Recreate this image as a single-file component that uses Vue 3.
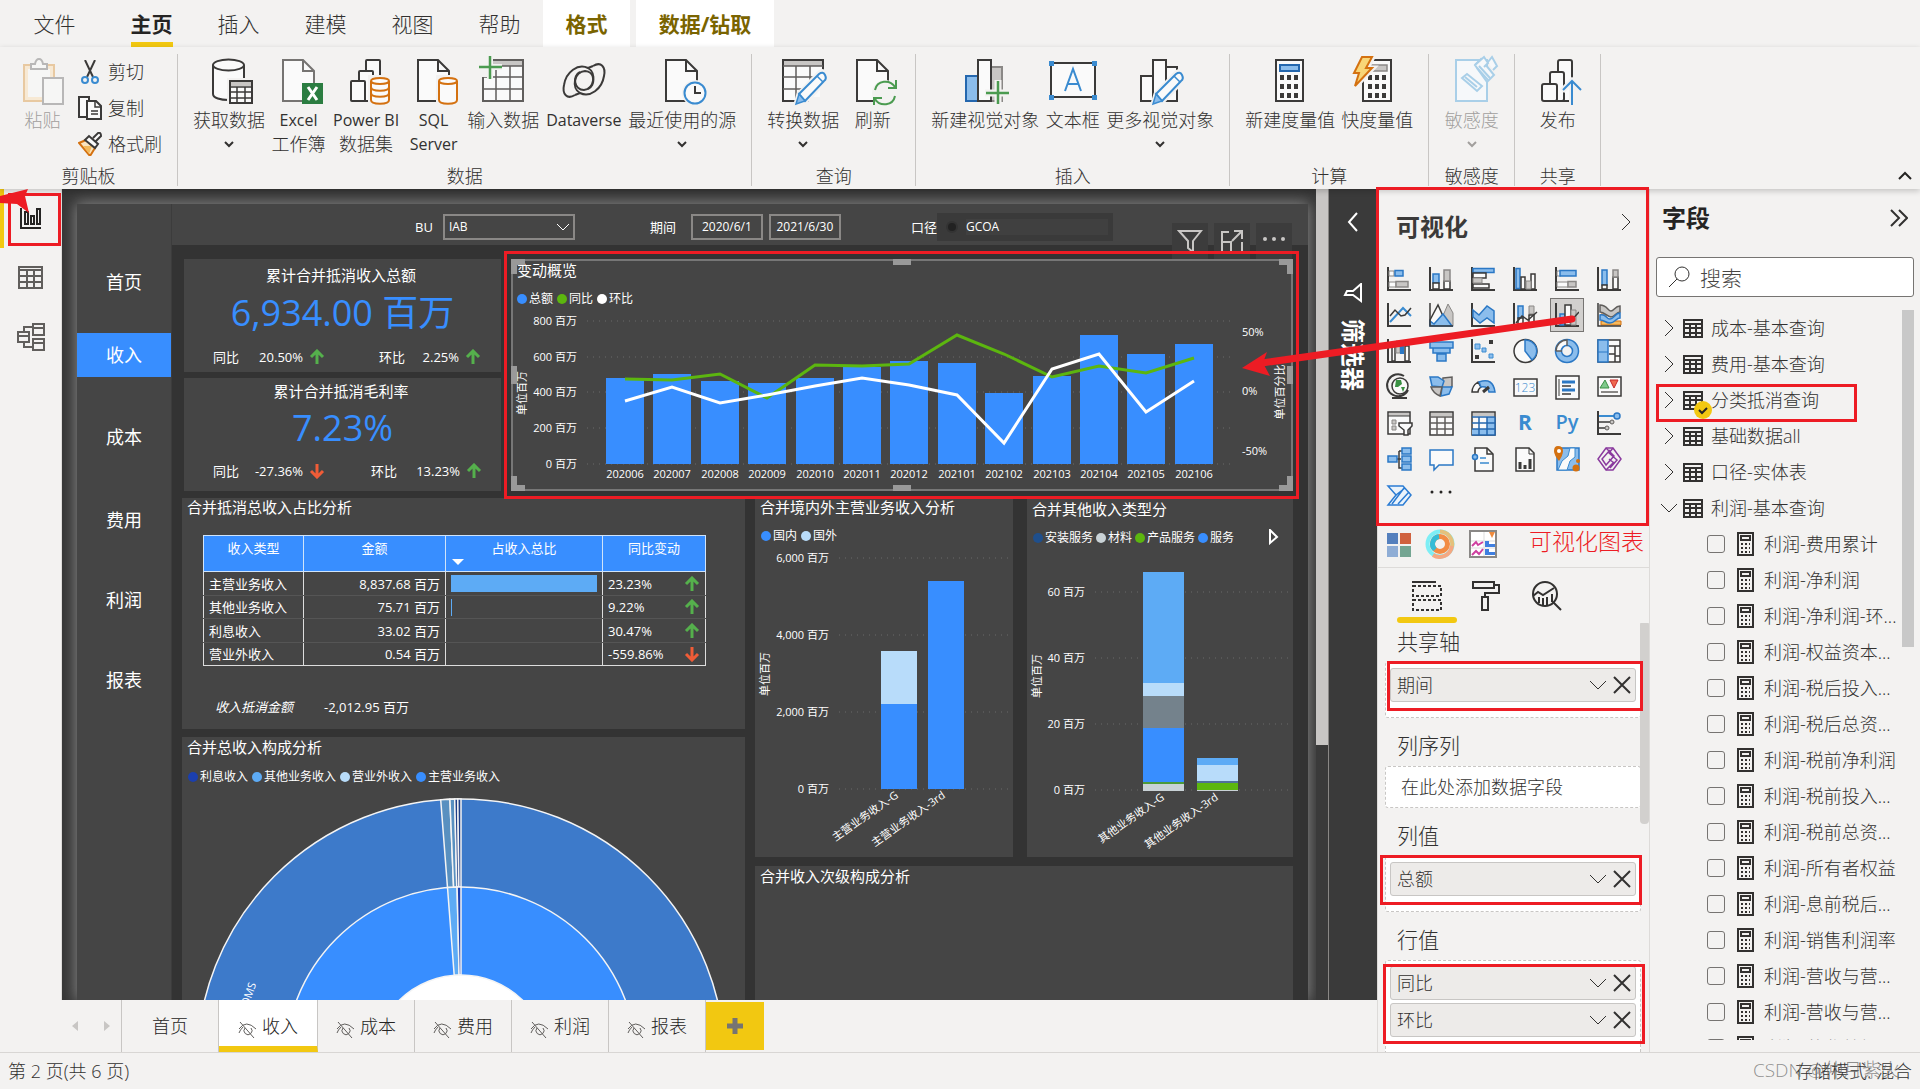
<script setup>
const K = '#3b3a39'
const B = '#2b78c5'
const L = '#8bbdec'
const G = '#c8c6c4'
const W = '#fafafa'

const page = (c = K) => `<path d="M8 3h20l11 11v30H8z" fill="${W}" stroke="${c}" stroke-width="2"/><path d="M28 3v11h11" fill="none" stroke="${c}" stroke-width="2"/>`
const orangeCyl = (rings) => `<path d="M26 18h22v30H26z" fill="#f3f2f1"/><path d="M29 24v19c0 5 18 5 18 0V24" fill="${W}" stroke="#d47110" stroke-width="2"/><ellipse cx="38" cy="24" rx="9" ry="3" fill="${W}" stroke="#d47110" stroke-width="2"/>` + (rings ? '<path d="M29 30c0 5 18 5 18 0M29 36c0 5 18 5 18 0" fill="none" stroke="#d47110" stroke-width="2"/>' : '')
const pencil = `<path d="M17 47l3-10 20-21q4-3 7 1t-1 7L26 45z" fill="${W}" stroke="#f3f2f1" stroke-width="5"/><path d="M20 37l20-20q4-3 6 1t-1 6L26 44z" fill="${W}" stroke="#3a8bd0" stroke-width="2"/><path d="M17 47l3-10 6 7z" fill="${L}" stroke="#3a8bd0" stroke-width="1.5"/><path d="M38 19l6 6" stroke="#3a8bd0" stroke-width="1.5"/>`
const keypad = (x, y) => [0, 1, 2].map(r => [0, 1, 2].map(c => `<rect x="${x + c * 7}" y="${y + r * 9}" width="4" height="5" fill="${K}"/>`).join('')).join('')

const big = {
  paste: `<g opacity=".55"><path d="M5 8h30v36H5z" fill="#fbe3bd" stroke="#e0a860" stroke-width="2"/><path d="M9 12h22v28H9z" fill="${W}"/><path d="M12 12V7h4q1-5 4-5t4 5h4v5z" fill="${W}" stroke="#888" stroke-width="2"/><path d="M24 21h20v26H24z" fill="${W}" stroke="#888" stroke-width="2"/></g>`,
  getdata: `<path d="M8 8v29c0 8 31 8 31 0V8" fill="${W}" stroke="${K}" stroke-width="2"/><ellipse cx="23.500" cy="8" rx="15.500" ry="5.500" fill="${W}" stroke="${K}" stroke-width="2"/><path d="M22 21h26v27H22z" fill="#f3f2f1"/><path d="M25 24h22v22H25z" fill="${W}" stroke="${K}" stroke-width="2"/><path d="M26 25h20v4H26z" fill="${G}"/><path d="M25 30h22M25 35h22M25 41h22M32 30v16M40 30v16" stroke="${K}" stroke-width="1.500"/>`,
  excel: page('#767472') + `<path d="M27 26h21v21H27z" fill="#2b7d41"/><path d="M33 30l9 13M42 30l-9 13" stroke="#fff" stroke-width="3"/>`,
  pbi: `<g fill="${W}" stroke="${K}" stroke-width="2"><rect x="24" y="3" width="14" height="40" rx="1"/><rect x="17" y="14" width="14" height="30" rx="1"/><rect x="9" y="24" width="14" height="20" rx="1"/></g>` + orangeCyl(true),
  sql: page() + orangeCyl(false),
  enter: `<path d="M4 3h40v41H4z" fill="${W}" stroke="#605e5c" stroke-width="2"/><path d="M5 4h38v5H5z" fill="${G}"/><path d="M4 9h40M4 20h40M4 32h40M17 9v35M31 9v35" stroke="#605e5c" stroke-width="1.500"/><path d="M0 0h14v20H0z" fill="#f3f2f1"/><path d="M0 10h23M11 -1v23" stroke="#f3f2f1" stroke-width="6"/><path d="M0 10h23M11 -1v23" stroke="#4b9b50" stroke-width="2.500"/>`,
  dataverse: `<g fill="none" stroke="${K}" stroke-width="2"><path d="M33 9c8-5 13 1 11 10C42 32 30 41 20 36c-9-5-6-21 5-22 10 0 11 15 3 18"/><path d="M15 38c-8 5-13-1-11-10C6 15 18 6 28 11c9 5 6 21-4 22-10 0-12-14-4-18"/><path d="M28 11l5-2M20 36l-5 2"/></g>`,
  recent: page() + `<circle cx="37" cy="36" r="13" fill="#f3f2f1"/><circle cx="37" cy="36" r="10.500" fill="${W}" stroke="#3a8bd0" stroke-width="2"/><path d="M37 29v7h6" fill="none" stroke="${K}" stroke-width="2"/>`,
  transform: `<path d="M4 3h40v41H4z" fill="${W}" stroke="${K}" stroke-width="2"/><path d="M5 4h38v5H5z" fill="${G}"/><path d="M4 9h40M4 20h40M4 32h40M17 9v35M31 9v35" stroke="#605e5c" stroke-width="1.500"/><path d="M30 40h17v7H30zM41 26h7v20h-7z" fill="#f3f2f1"/>` + pencil,
  refresh: page() + `<circle cx="36" cy="36" r="13" fill="#f3f2f1"/><g fill="none" stroke="#4b9b50" stroke-width="2"><path d="M26 33c2-10 15-11 20-3M46 39c-2 10-15 11-20 3"/><path d="M47 23v8h-8M25 48v-7h8"/></g>`,
  newvisual: `<path d="M30 10h11v34H30z" fill="${G}" stroke="#8a8886" stroke-width="2"/><path d="M5 19h12v25H5z" fill="${L}" stroke="#2467ae" stroke-width="2"/><path d="M17 3h13v41H17z" fill="${W}" stroke="${K}" stroke-width="2"/><path d="M24 36h24M37 23v25" stroke="#f3f2f1" stroke-width="7"/><path d="M25 36h23M37 24v23" stroke="#4b9b50" stroke-width="2.500"/>`,
  textbox: `<path d="M2 6h44v34H2z" fill="${W}" stroke="${K}" stroke-width="2"/><g fill="#3a8bd0"><path d="M0 4h5v5H0zM43 4h5v5h-5zM0 38h5v5H0zM43 38h5v5h-5z"/></g><path d="M16 34l8-22 8 22M19 27h10" fill="none" stroke="#3a8bd0" stroke-width="2"/>`,
  morevisual: `<g fill="${W}" stroke="${K}" stroke-width="2"><path d="M30 10h11v34H30zM5 19h12v25H5zM17 3h13v41H17z"/></g>` + pencil,
  measure: `<path d="M10 3h27v41H10z" fill="${W}" stroke="${K}" stroke-width="2"/><path d="M14 8h19v6H14z" fill="${L}" stroke="#2467ae" stroke-width="2"/>` + keypad(14, 18),
  quick: `<path d="M10 3h28v41H10z" fill="${W}" stroke="${K}" stroke-width="2"/><path d="M16 8h18v6H16z" fill="${G}" stroke="#8a8886" stroke-width="1.500"/>` + keypad(15, 18) + `<path d="M8 0h12l-6 11h6L2 30l4-13H1z" fill="#f3f2f1" stroke="#f3f2f1" stroke-width="5"/><path d="M9 0h10l-6 11h6L2 29l4-13H1z" fill="#f8d678" stroke="#d47110" stroke-width="2"/>`,
  sensitivity: `<g fill="#f6f8fa" stroke="#a9cfe8" stroke-width="2"><path d="M8 3h31v41H8z"/><path d="M14 21l5-4 15 12-5 5z"/><path d="M17 20l12 10" /><path d="M27 8l6-6 13 16-7 7z"/><path d="M27 8l9-8 4 6-4 4M40 5l4-5 5 9-4 4" /><path d="M29 11l11 12M31 9l11 12"/></g>`,
  publish: `<g fill="${W}" stroke="${K}" stroke-width="2"><rect x="24" y="3" width="14" height="41" rx="2"/><rect x="16" y="15" width="14" height="29" rx="2"/><rect x="8" y="27" width="15" height="17" rx="2"/></g><path d="M38 48V24M28 34l10-10 10 10" fill="none" stroke="#f3f2f1" stroke-width="6"/><path d="M38 48V25M29 33l9-9 9 9" fill="none" stroke="#3a8bd0" stroke-width="2"/>`
}

const small = {
  cut: `<path d="M7 0l8 17M17 0L9 17" stroke="${K}" stroke-width="2" fill="none"/><circle cx="7" cy="20" r="3" fill="none" stroke="#3a8bd0" stroke-width="2"/><circle cx="17" cy="20" r="3" fill="none" stroke="#3a8bd0" stroke-width="2"/>`,
  copy: `<path d="M1 1h10v20H1z" fill="${W}" stroke="${K}" stroke-width="2"/><path d="M9 5h9l5 5v13H9z" fill="${W}" stroke="${K}" stroke-width="2"/><path d="M17 5v6h6M13 15h7M13 18h7" fill="none" stroke="${K}" stroke-width="1.500"/>`,
  brush: `<path d="M1 11l7-3 9 8-5 8z" fill="#fbe3bd" stroke="#d47110" stroke-width="2"/><path d="M5 14l9 0-3 8z" fill="#f3b95b"/><path d="M7 8l4-4 9 8-3 4zM15 6l5-5q3-1 3 3l-5 5" fill="${W}" stroke="${K}" stroke-width="2"/>`
}

const menu = ['文件', '主页', '插入', '建模', '视图', '帮助']
const clip = [['cut', '剪切'], ['copy', '复制'], ['brush', '格式刷']]
const groups = [
  { name: '数据', items: [
    { i: 'getdata', t: ['获取数据'], d: 1 }, { i: 'excel', t: ['Excel', '工作簿'] }, { i: 'pbi', t: ['Power BI', '数据集'] },
    { i: 'sql', t: ['SQL', 'Server'] }, { i: 'enter', t: ['输入数据'] }, { i: 'dataverse', t: ['Dataverse'] }, { i: 'recent', t: ['最近使用的源'], d: 1 }] },
  { name: '查询', items: [{ i: 'transform', t: ['转换数据'], d: 1 }, { i: 'refresh', t: ['刷新'] }] },
  { name: '插入', items: [{ i: 'newvisual', t: ['新建视觉对象'] }, { i: 'textbox', t: ['文本框'] }, { i: 'morevisual', t: ['更多视觉对象'], d: 1 }] },
  { name: '计算', items: [{ i: 'measure', t: ['新建度量值'] }, { i: 'quick', t: ['快度量值'] }] },
  { name: '敏感度', items: [{ i: 'sensitivity', t: ['敏感度'], d: 1, off: 1 }] },
  { name: '共享', items: [{ i: 'publish', t: ['发布'] }] }
]
const latin = s => /^[A-Za-z ]+$/.test(s)

const nav = ['首页', '收入', '成本', '费用', '利润', '报表']
const kpis = [
  { title: '累计合并抵消收入总额', value: '6,934.00 百万', a: '20.50%', aUp: true, b: '2.25%' },
  { title: '累计合并抵消毛利率', value: '7.23%', a: '-27.36%', aUp: false, b: '13.23%' }
]

const months = ['202006', '202007', '202008', '202009', '202010', '202011', '202012', '202101', '202102', '202103', '202104', '202105', '202106']
const totals = [86, 90, 83, 81, 86, 97, 103, 101, 71, 88, 129, 110, 120]
const yoy = [72, 73, 67, 91, 58, 59, 57, 28, 47, 70, 59, 66, 51]
const mom = [94, 80, 96, 88, 79, 71, 78, 88, 136, 62, 47, 105, 74]
const cx = i => 114 + Math.round(i * 47.4)
const line = ys => ys.map((y, i) => `${cx(i)},${y}`).join(' ')
const axis1 = [['800 百万', 14], ['600 百万', 50], ['400 百万', 85], ['200 百万', 121], ['0 百万', 157]]

const rows = [
  ['主营业务收入', '8,837.68 百万', '23.23%', true, 100],
  ['其他业务收入', '75.71 百万', '9.22%', true, 1],
  ['利息收入', '33.02 百万', '30.47%', true, 0],
  ['营业外收入', '0.54 百万', '-559.86%', false, 0]
]

const axis2 = [['6,000 百万', 14], ['4,000 百万', 91], ['2,000 百万', 168], ['0 百万', 245]]
const axis3 = [['60 百万', 46], ['40 百万', 112], ['20 百万', 178], ['0 百万', 244]]
const stack3 = [
  [116, 26, 111, '#5dabf5'], [116, 137, 13, '#b8dcfa'], [116, 150, 32, '#74828c'], [116, 182, 54, '#388eff'], [116, 236, 2, '#4c9a3a'], [116, 238, 7, '#c9d2d6'],
  [170, 212, 7, '#5dabf5'], [170, 219, 16, '#b8dcfa'], [170, 235, 2, '#50709a'], [170, 237, 7, '#5cb60f'], [170, 244, 1, '#c9d2d6']
]

const pt = (r, a) => `${(279 - r * Math.sin(a)).toFixed(1)} ${(278 - r * Math.cos(a)).toFixed(1)}`
const slice = (r0, r1, a0, a1) => `M${pt(r0, a0)}L${pt(r1, a0)}A${r1} ${r1} 0 0 1 ${pt(r1, a1)}L${pt(r0, a1)}z`
const slices = [
  [176, 264, 0.077, 0.042, '#5990c0'], [176, 264, 0.042, 0.024, '#5990c0'], [176, 264, 0.024, 0.012, '#1f3f86'], [176, 264, 0.012, 0, '#1f3f86'],
  [88, 176, 0.077, 0.022, '#5dabf5'], [88, 176, 0.022, 0, '#1b3fae']
]

const sheets = ['收入', '成本', '费用', '利润', '报表']

const ax = `<path d="M1 0v23h23" fill="none" stroke="${K}" stroke-width="2"/>`
const frame = `fill="${W}" stroke="${K}" stroke-width="1.500"`
const viz = [
  ax + `<path d="M2 4h5v5H2zM2 15h7v5H2z" fill="${W}" stroke="#8a8886"/><path d="M8 3.500h8v5.500H8z" fill="${L}" stroke="${B}" stroke-width="1.500"/><path d="M9 14.500h12v5.500H9z" fill="${G}" stroke="#8a8886" stroke-width="1.500"/>`,
  ax + `<path d="M4 7h6v9H4z" fill="${L}" stroke="${B}" stroke-width="1.500"/><path d="M4 16h6v6H4zM15 14h6v8h-6z" ${frame}/><path d="M15 3h6v11h-6z" fill="${G}" stroke="#8a8886" stroke-width="1.500"/>`,
  ax + `<path d="M2 1.500h21v4H2z" fill="${L}" stroke="${B}" stroke-width="1.500"/><path d="M2 6h13v5H2zM2 17h16v4H2z" ${frame}/><path d="M2 11h9v5H2z" fill="${G}" stroke="#8a8886"/>`,
  ax + `<path d="M3 1.500h4v20H3z" fill="${L}" stroke="${B}" stroke-width="1.500"/><path d="M8 10h4v12H8zM18 7h4v15h-4z" ${frame}/><path d="M13 14h5v8h-5z" fill="${G}" stroke="#8a8886"/>`,
  ax + `<path d="M2 4h4v5H2zM2 15h11v5H2z" fill="${W}" stroke="#8a8886"/><path d="M5 3.500h16v5.500H5z" fill="${L}" stroke="${B}" stroke-width="1.500"/><path d="M13 14.500h8v5.500h-8z" fill="${G}" stroke="#8a8886" stroke-width="1.500"/>`,
  ax + `<path d="M5 3h5v15H5z" fill="${L}" stroke="${B}" stroke-width="1.500"/><path d="M5 18h5v4H5zM16 10h5v12h-5z" ${frame}/><path d="M16 3h5v7h-5z" fill="${G}" stroke="#8a8886" stroke-width="1.500"/>`,
  ax + `<path d="M3 19L16 5l8 8" fill="none" stroke="#3a8bd0" stroke-width="2"/><path d="M3 13l5-6 6 6 4-1 6-7" fill="none" stroke="${K}" stroke-width="1.500"/>`,
  `<path d="M10 22L19 1l5 9v13z" fill="${G}" stroke="#8a8886"/><path d="M1 17L9 2l9 20H1z" fill="${W}" stroke="${K}" stroke-width="1.500"/><path d="M1 23v-5l4 3 9-10 9 12z" fill="${L}" stroke="${B}" stroke-width="1.500"/><path d="M1 0v23h23" fill="none" stroke="${K}" stroke-width="1.500"/>`,
  ax + `<path d="M2 7l6 5 8-9 7 5v12l-7-5-7 5-7-6z" fill="${L}" stroke="${B}" stroke-width="1.500"/>`,
  ax + `<path d="M5 3h5v12H5z" fill="${L}" stroke="${B}" stroke-width="1.500"/><path d="M16 3h5v8h-5z" fill="${G}" stroke="#8a8886"/><path d="M5 15h5v7H5zM16 12h5v10h-5z" ${frame}/><path d="M3 20l6-7 6 4 9-8" fill="none" stroke="${K}" stroke-width="1.500"/>`,
  ax + `<path d="M5 11h5v11H5z" fill="${L}" stroke="${B}" stroke-width="1.500"/><path d="M10 2h6v20h-6z" ${frame}/><path d="M16 7h5v15h-5z" fill="${G}" stroke="#8a8886"/><path d="M14 20l10-11" stroke="${K}" stroke-width="1.500"/>`,
  `<path d="M4 18h20v4H4zM4 11h5v5H4z" fill="#f5b95d" stroke="#d47110"/><path d="M3 2c7 0 8 6 11 6s4-5 9-5v6c-4 0-5 5-9 5S8 9 3 9z" fill="${G}" stroke="#605e5c" stroke-width="1.500"/><path d="M3 12c6-2 6 4 10 4s5-6 10-6v5c-4 0-5 5-10 5S8 17 3 17z" fill="${L}" stroke="${B}" stroke-width="1.500"/><path d="M1 0v23h23" fill="none" stroke="${K}" stroke-width="1.500"/>`,
  ax + `<path d="M5 4h3v18H5zM18 7h4v15h-4z" ${frame}/><path d="M9 2h4v12H9z" fill="${G}" stroke="#8a8886"/><path d="M13 3h4v12h-4z" fill="${B}"/>`,
  `<path d="M1 3h23v6H1zM4 9h17v5H4zM8 15h9v7H8z" fill="${L}" stroke="${B}" stroke-width="1.500"/>`,
  ax + `<path d="M4 5h5v5H4zM11 9h4v4h-4zM18 15h4v4h-4z" fill="${L}" stroke="#3a8bd0"/><path d="M18 1h4v4h-4zM4 16h4v4H4z" fill="${K}"/>`,
  `<circle cx="12.500" cy="12" r="11.500" fill="${W}" stroke="${K}" stroke-width="1.500"/><path d="M12 1a11 11 0 0 1 7 20l-7-9z" fill="${L}" stroke="${B}" stroke-width="1.500"/>`,
  `<circle cx="12" cy="12" r="8.500" fill="none" stroke="${L}" stroke-width="6"/><path d="M3 12a9 9 0 0 1 9-9" fill="none" stroke="${W}" stroke-width="5"/><circle cx="12" cy="12" r="11.500" fill="none" stroke="${B}" stroke-width="1.500"/><circle cx="12" cy="12" r="5.500" fill="none" stroke="${B}" stroke-width="1.500"/><path d="M1 12A11 11 0 0 1 12 1v6M1 12h6" fill="none" stroke="#605e5c" stroke-width="1.500"/>`,
  `<path d="M1 1h22v22H1z" ${frame}/><path d="M1 1h10v22H1z" fill="${L}" stroke="${B}" stroke-width="1.500"/><path d="M1 13h10" stroke="${B}"/><path d="M12 7h11M18 7v16M12 15h6M18 17h5" stroke="${K}" stroke-width="1.500"/>`,
  `<path d="M17 1a11 11 0 1 0 4 14M5 23h15M13 20v3" fill="none" stroke="${K}" stroke-width="2"/><circle cx="13" cy="11" r="8" ${frame}/><path d="M9 5l5 0 1 4-4 3-3 0zM14 12l4 0-2 5z" fill="#3a9143"/>`,
  `<path d="M14 3l9-1v9l-3 4-7-3z" fill="${G}" stroke="#605e5c" stroke-width="1.500"/><path d="M1 2h8l6 4-2 6-10-1zM13 12h10l-3 7-8 2z" fill="${L}" stroke="${B}" stroke-width="1.500"/><path d="M2 12l11 0-2 9q-7-3-9-9z" fill="${G}" stroke="#605e5c" stroke-width="1.500"/>`,
  `<path d="M1 17h6q0-3 3-5L7 7Q1 11 1 17z" ${frame}/><path d="M8 7q14-5 16 10h-6q-1-6-8-5z" fill="${L}" stroke="${B}" stroke-width="1.500"/><path d="M12 17l6-5" stroke="${K}" stroke-width="3"/>`,
  `<path d="M1 4h23v17H1z" ${frame}/><text x="12" y="17" text-anchor="middle" font-size="12" font-family="Open Sans" fill="#3a8bd0">123</text>`,
  `<path d="M1 1h23v23H1z" ${frame}/><path d="M4 4v17" stroke="${K}"/><path d="M7 7h13M7 15h13" stroke="${B}" stroke-width="3"/><path d="M7 11h9M7 19h9" stroke="${K}" stroke-width="1.500"/>`,
  `<path d="M1 2h23v19H1z" ${frame}/><path d="M3 13l5-8 4 8z" fill="#7fc98b" stroke="#3a9143"/><path d="M13 5h8l-4 8z" fill="#ef6950" stroke="#c62828"/><path d="M4 17h17" stroke="#8a8886" stroke-width="2"/>`,
  `<path d="M1 1h22v22H1z" ${frame}/><path d="M2 2h20v3H2z" fill="${G}"/><path d="M1 5h22" stroke="${K}"/><path d="M5 9h4v4H5zM5 15h4v4H5z" fill="${G}" stroke="#8a8886"/><path d="M12 12h13v3l-4 4v5h-4v-5l-5-4z" ${frame}/>`,
  `<path d="M1 1h23v23H1z" ${frame}/><path d="M2 2h21v3H2z" fill="${G}"/><path d="M1 6h23M1 12h23M1 18h23M8 6v18M16 6v18" stroke="#605e5c" stroke-width="1.500"/>`,
  `<path d="M1 1h23v23H1z" ${frame}/><path d="M2 2h21v3H2z" fill="${G}"/><path d="M16 6h8v18H1v-6h15z" fill="${L}"/><path d="M1 6h23M1 12h23M1 18h23M8 6v18M16 6v18M24 6v18H1" fill="none" stroke="#2467ae" stroke-width="1.500"/>`,
  `<text x="12" y="19" text-anchor="middle" font-size="21" font-weight="700" font-family="Open Sans" fill="#3a8bd0">R</text>`,
  `<text x="12" y="18" text-anchor="middle" font-size="20" font-weight="600" font-family="Open Sans" fill="#3a8bd0">Py</text>`,
  ax + `<path d="M2 5h16" stroke="#3a8bd0" stroke-width="2"/><circle cx="20" cy="5" r="3" fill="${L}" stroke="${B}" stroke-width="1.500"/><path d="M2 11h11M2 17h6" stroke="${K}" stroke-width="1.500"/><circle cx="15" cy="11" r="2" fill="${G}" stroke="#605e5c"/><circle cx="10" cy="17" r="2" fill="${G}" stroke="#605e5c"/>`,
  `<path d="M9 12h5M12 4v17h4M12 4h4" fill="none" stroke="${K}" stroke-width="1.500"/><path d="M1 9h9v6H1zM15 1h9v6h-9zM15 9h9v6h-9zM15 17h9v6h-9z" fill="${L}" stroke="${B}" stroke-width="1.500"/>`,
  `<path d="M1 3h23v15H10l-5 5v-5H1z" fill="${W}" stroke="${B}" stroke-width="1.500"/>`,
  `<path d="M4 1h12l6 6v17H4z" ${frame}/><path d="M16 1v6h6" fill="none" stroke="${K}" stroke-width="1.500"/><circle cx="4" cy="10" r="2.500" fill="${L}" stroke="${B}" stroke-width="1.500"/><path d="M9 11h6M9 16h9" stroke="#3a8bd0" stroke-width="1.500"/>`,
  `<path d="M3 1h13l5 5v18H3z" ${frame}/><path d="M16 1v6h5" fill="none" stroke="${K}"/><path d="M7 15v7M12 18v4M17 12v10" stroke="${K}" stroke-width="3"/>`,
  `<path d="M2 1h22v22H2z" fill="${L}" stroke="${B}" stroke-width="1.500"/><path d="M12 23l3-9 5-4 0-9h-5l-2 8-6 5-4 9z" fill="${W}" stroke="#3a8bd0"/><path d="M3-1q5 0 5 5 0 4-4 10-5-6-5-10 0-5 4-5z" fill="#d47110"/><circle cx="4" cy="4" r="2" fill="#fff"/><circle cx="21" cy="21" r="3.500" fill="#d47110"/><circle cx="23" cy="14" r="2" fill="#d47110"/>`,
  `<g fill="none" stroke="#8a3a9e" stroke-width="1.500"><path d="M9 1h7l8 11-8 11H9L1 12z"/><path d="M9 1l8 8-8 9-4-6 8-9M9 23l8-8M16 1l-4 5 8 7-7 8M12 12l5 4"/></g>`,
  `<g fill="#eaf3fb" stroke="#2b7cd3" stroke-width="1.500"><path d="M1 3h15l8 9-8 10H1l8-10z"/><path d="M9 12l9-7M5 21L17 5M11 21l11-12" fill="none"/></g>`,
  `<g fill="#252423"><circle cx="3" cy="9" r="1.500"/><circle cx="12" cy="9" r="1.500"/><circle cx="21" cy="9" r="1.500"/></g>`
]

const wells = [
  { t: '共享轴', chips: ['期间'] },
  { t: '列序列', chips: [] },
  { t: '列值', chips: ['总额'] },
  { t: '行值', chips: ['同比', '环比'] }
]
const tables = ['成本-基本查询', '费用-基本查询', '分类抵消查询', '基础数据all', '口径-实体表', '利润-基本查询']
const fields = ['利润-费用累计', '利润-净利润', '利润-净利润-环...', '利润-权益资本...', '利润-税后投入...', '利润-税后总资...', '利润-税前净利润', '利润-税前投入...', '利润-税前总资...', '利润-所有者权益', '利润-息前税后...', '利润-销售利润率', '利润-营收与营...', '利润-营收与营...', '利润-营业总额']
</script>

<template>
  <div class="app">
    <nav class="menu">
      <button v-for="m in menu" :key="m" :class="{ on: m === '主页' }"><span>{{ m }}</span></button>
      <button class="ctx">格式</button>
      <button class="ctx wide">数据/钻取</button>
    </nav>

    <header class="ribbon">
      <section class="group">
        <div class="tools">
          <button class="tool off"><svg width="48" height="48" v-html="big.paste"></svg><span>粘贴</span></button>
          <div class="minis">
            <button v-for="c in clip" :key="c[0]" class="mini"><svg width="24" height="24" v-html="small[c[0]]"></svg>{{ c[1] }}</button>
          </div>
        </div>
        <h2>剪贴板</h2>
      </section>
      <section v-for="g in groups" :key="g.name" class="group">
        <div class="tools">
          <button v-for="b in g.items" :key="b.i" class="tool" :class="{ off: b.off }">
            <svg width="48" height="48" v-html="big[b.i]"></svg>
            <span v-for="s in b.t" :key="s" :class="{ latin: latin(s) }">{{ s }}</span>
            <svg v-if="b.d" class="caret" width="10" height="24"><path d="M1 10l4 4 4-4" /></svg>
          </button>
        </div>
        <h2>{{ g.name }}</h2>
      </section>
      <button class="collapse" aria-label="折叠功能区"><svg width="14" height="10"><path d="M1 8l6-6 6 6" /></svg></button>
    </header>

    <main class="work">
      <div class="left">
        <div class="stage">
          <aside class="rail">
            <button class="active" aria-label="报表"><svg width="22" height="22"><path d="M1 0v20h20" /><path d="M5 4h3v12H5zM11 8h3v8h-3zM17 1h3v15h-3z" /></svg></button>
            <button aria-label="数据"><svg width="26" height="24"><path d="M1 1h23v21H1zM1 4h23M1 10h23M1 16h23M9 4v18M16 4v18" /></svg></button>
            <button aria-label="模型"><svg width="28" height="28"><path d="M1 9h11v10H1zM16 1h11v11H16zM16 16h11v11H16zM1 13h11M16 5h11M16 20h11M7 9V4h9M7 19v5h9" /></svg></button>
            <i class="mark"></i>
          </aside>

          <div class="canvas">
            <div class="page">
              <nav class="side">
                <a v-for="n in nav" :key="n" href="#" :class="{ on: n === '收入' }">{{ n }}</a>
              </nav>
              <div class="sheet">
                <div class="filters">
                  <label for="bu">BU</label>
                  <div class="dropdown"><select id="bu"><option>IAB</option></select><svg width="14" height="10"><path d="M1 2l6 6 6-6" /></svg></div>
                  <label for="d1" class="period">期间</label>
                  <input id="d1" class="date" value="2020/6/1">
                  <input class="date" value="2021/6/30" aria-label="结束日期">
                  <span class="scope">口径</span>
                  <label class="radio"><input type="radio" name="scope"><span>GCOA</span></label>
                </div>

                <div class="body">
                  <div class="row top">
                    <div class="kpis">
                      <section v-for="k in kpis" :key="k.title" class="card kpi">
                        <h3>{{ k.title }}</h3>
                        <strong>{{ k.value }}</strong>
                        <p>
                          <span>同比</span><b>{{ k.a }}</b>
                          <svg width="16" height="16"><path :d="k.aUp ? 'M8 15V2M2 8l6-6 6 6' : 'M8 1v13M2 8l6 6 6-6'" :class="k.aUp ? 'up' : 'down'" /></svg>
                          <span class="second">环比</span><b>{{ k.b }}</b>
                          <svg width="16" height="16"><path d="M8 15V2M2 8l6-6 6 6" class="up" /></svg>
                        </p>
                      </section>
                    </div>

                    <section class="card combo">
                      <div class="actions">
                        <button aria-label="筛选"><svg width="26" height="26"><path d="M2 3h22l-8 10v11l-5-4v-7z" /></svg></button>
                        <button aria-label="焦点模式"><svg width="26" height="26"><path d="M10 4H3v20h20V14M3 14h9v10M13 13L23 3M15 3h8v8" /></svg></button>
                        <button aria-label="更多"><svg width="26" height="26"><g><circle cx="4" cy="11" r="2" /><circle cx="13" cy="11" r="2" /><circle cx="22" cy="11" r="2" /></g></svg></button>
                      </div>
                      <h3>变动概览</h3>
                      <ul class="legend"><li><i class="c1"></i>总额</li><li><i class="c2"></i>同比</li><li><i class="c3"></i>环比</li></ul>
                      <svg class="chart" viewBox="0 0 782 184">
                        <g v-for="a in axis1" :key="a[0]"><text x="66" :y="a[1] + 4" text-anchor="end">{{ a[0] }}</text><line x1="76" x2="720" :y1="a[1]" :y2="a[1]" /></g>
                        <rect v-for="(t, i) in totals" :key="'b' + i" :x="cx(i) - 19" :y="157 - t" width="38" :height="t" fill="#388eff" />
                        <polyline :points="line(yoy)" stroke="#5cb60f" />
                        <polyline :points="line(mom)" stroke="#fff" />
                        <text v-for="(m, i) in months" :key="m" :x="cx(i)" y="171" text-anchor="middle">{{ m }}</text>
                        <text x="731" y="29">50%</text><text x="731" y="88">0%</text><text x="731" y="148">-50%</text>
                        <text transform="translate(15 86) rotate(-90)" text-anchor="middle">单位百万</text>
                        <text transform="translate(773 85) rotate(-90)" text-anchor="middle">单位百分比</text>
                      </svg>
                      <svg class="handles" viewBox="0 0 782 232">
                        <path d="M1 1h780v230H1z" fill="none" stroke="#777" stroke-width="2" />
                        <path d="M0 0h14v6H6v9H0zM782 0h-14v6h8v9h6zM0 232h14v-6H6v-9H0zM782 232h-14v-6h8v-9h6zM382 0h18v6h-18zM382 226h18v6h-18zM0 107h6v18H0zM776 107h6v18h-6z" fill="#999" />
                      </svg>
                      <i class="mark"></i>
                    </section>
                  </div>

                  <div class="row">
                    <div class="colA">
                      <section class="card share">
                        <h3>合并抵消总收入占比分析</h3>
                        <table>
                          <thead><tr><th class="w1">收入类型</th><th class="w2">金额</th><th class="w3">占收入总比<i></i></th><th>同比变动</th></tr></thead>
                          <tbody>
                            <tr v-for="r in rows" :key="r[0]">
                              <td>{{ r[0] }}</td><td class="num">{{ r[1] }}</td>
                              <td class="barcell"><div :style="{ width: r[4] + '%' }"></div></td>
                              <td class="chg"><span>{{ r[2] }}</span><svg width="16" height="16"><path :d="r[3] ? 'M8 15V2M2 8l6-6 6 6' : 'M8 1v13M2 8l6 6 6-6'" :class="r[3] ? 'up' : 'down'" /></svg></td>
                            </tr>
                          </tbody>
                        </table>
                        <p class="off-amt"><em>收入抵消金额</em><span>-2,012.95 百万</span></p>
                      </section>
                      <section class="card burst">
                        <h3>合并总收入构成分析</h3>
                        <ul class="legend"><li><i class="c4"></i>利息收入</li><li><i class="c5"></i>其他业务收入</li><li><i class="c6"></i>营业外收入</li><li><i class="c1"></i>主营业务收入</li></ul>
                        <svg class="chart" viewBox="0 0 563 216">
                          <g stroke="#f4f4f4" stroke-width="1.5">
                            <circle cx="279" cy="278" r="264" fill="#3d7aca" />
                            <circle cx="279" cy="278" r="176" fill="#388eff" />
                            <path v-for="(s, i) in slices" :key="i" :d="slice(s[0], s[1], s[2], s[3])" :fill="s[4]" />
                            <circle cx="279" cy="278" r="88" fill="#fff" />
                          </g>
                          <text transform="translate(66 222) rotate(-70)">OMS</text>
                        </svg>
                      </section>
                    </div>

                    <div class="colB">
                      <div class="pair">
                        <section class="card c">
                          <h3>合并境内外主营业务收入分析</h3>
                          <ul class="legend"><li><i class="c1"></i>国内</li><li><i class="c6"></i>国外</li></ul>
                          <svg class="chart" viewBox="0 0 258 312">
                            <g v-for="a in axis2" :key="a[0]"><text x="74" :y="a[1] + 4" text-anchor="end">{{ a[0] }}</text><line x1="84" x2="253" :y1="a[1]" :y2="a[1]" /></g>
                            <rect x="126" y="107" width="36" height="53" fill="#b8dcfa" /><rect x="126" y="160" width="36" height="85" fill="#388eff" />
                            <rect x="173" y="37" width="36" height="208" fill="#388eff" />
                            <text transform="translate(14 130) rotate(-90)" text-anchor="middle">单位百万</text>
                            <text transform="translate(144 253) rotate(-35)" text-anchor="end">主营业务收入-G</text>
                            <text transform="translate(191 253) rotate(-35)" text-anchor="end">主营业务收入-3rd</text>
                          </svg>
                        </section>
                        <section class="card d">
                          <h3>合并其他收入类型分</h3>
                          <ul class="legend tight"><li><i class="c7"></i>安装服务</li><li><i class="c8"></i>材料</li><li><i class="c2"></i>产品服务</li><li><i class="c1"></i>服务</li></ul>
                          <svg class="next" width="10" height="16"><path d="M1 1v13l7-6z" /></svg>
                          <svg class="chart" viewBox="0 0 266 311">
                            <g v-for="a in axis3" :key="a[0]"><text x="58" :y="a[1] + 4" text-anchor="end">{{ a[0] }}</text><line x1="68" x2="261" :y1="a[1]" :y2="a[1]" /></g>
                            <rect v-for="(s, i) in stack3" :key="i" :x="s[0]" :y="s[1]" width="41" :height="s[2]" :fill="s[3]" />
                            <text transform="translate(14 130) rotate(-90)" text-anchor="middle">单位百万</text>
                            <text transform="translate(138 253) rotate(-35)" text-anchor="end">其他业务收入-G</text>
                            <text transform="translate(192 253) rotate(-35)" text-anchor="end">其他业务收入-3rd</text>
                          </svg>
                        </section>
                      </div>
                      <section class="card e"><h3>合并收入次级构成分析</h3></section>
                    </div>
                  </div>
                </div>
              </div>
            </div>
          </div>

          <div class="scroll"><i></i></div>
          <aside class="filterpane">
            <button aria-label="展开"><svg width="12" height="20"><path d="M10 1L2 10l8 9" /></svg></button>
            <svg class="horn" width="20" height="20"><path d="M18 1v17l-8-6H2l2-4h6z" /></svg>
            <h2>筛选器</h2>
          </aside>
        </div>

        <nav class="sheets">
          <div class="pager"><svg width="60" height="12"><path d="M8 1v10L2 6zM34 1v10l6-5z" fill="#c8c6c4" /></svg></div>
          <button>首页</button>
          <button v-for="s in sheets" :key="s" :class="{ on: s === '收入' }">
            <svg width="19" height="19"><path d="M1 9Q8-1 18 9M2 2l14 16M5 7q-3 3-4 6M13 8a4 4 0 1 1-6 0" /></svg>{{ s }}
          </button>
          <button class="add" aria-label="新建页"><svg width="18" height="18"><path d="M9 1v16M1 9h16" /></svg></button>
        </nav>
      </div>

      <aside class="viz">
        <header><h2>可视化</h2><svg width="10" height="18"><path d="M1 1l8 8-8 8" /></svg></header>
        <div class="vgrid">
          <button v-for="(v, i) in viz" :key="i" :class="{ picked: i === 10 }"><svg width="25" height="25" v-html="v"></svg></button>
        </div>
        <div class="custom">
          <svg width="24" height="26"><path d="M0 2h11v11H0z" fill="#5580bd" /><path d="M13 2h11v11H13z" fill="#d0623f" /><path d="M0 15h11v11H0z" fill="#8fadd5" /><path d="M13 15h11v11H13z" fill="#74a592" /></svg>
          <svg width="30" height="30" fill="none"><circle cx="15" cy="15" r="12.500" stroke="#7eeef5" stroke-width="4" /><path d="M15 2.500a12.500 12.500 0 0 1 12 15" stroke="#e5c07b" stroke-width="4" /><path d="M27 17a12.500 12.500 0 0 1-19 9" stroke="#f5a882" stroke-width="4" /><circle cx="15" cy="15" r="7.500" stroke="#f28c45" stroke-width="5" /><path d="M14 7.500a7.500 7.500 0 0 0-4 13" stroke="#35bcd6" stroke-width="5" /></svg>
          <svg width="28" height="28"><path d="M1 1h26v26H1z" fill="#fff" stroke="#8a8886" stroke-width="2" /><path d="M2 11h24M2 18h24M15 2v24" stroke="#ddd" /><path d="M20 2h6l-3 6z" fill="#ef8a3c" /><path d="M3 16l4-4 2 3 5-3M3 25l4-4 3 3 4-5" fill="none" stroke="#cf3fa0" stroke-width="2" /><path d="M16 11h4v3h6v3H16zM16 19h4v3h6v3H16z" fill="#3f7fe0" /></svg>
          <span>可视化图表</span>
        </div>
        <div class="vtabs">
          <button class="on" aria-label="字段"><svg width="30" height="30"><path d="M0 1h24" /><path d="M1 5h28v10H1zM1 19h28v10H1z" stroke-dasharray="3 2" /></svg></button>
          <button aria-label="格式"><svg width="30" height="30"><path d="M1 1h21v6H1zM22 4h5v8H13v4M10 16h6v13h-6z" /></svg></button>
          <button aria-label="分析"><svg width="30" height="30"><circle cx="13" cy="13" r="12" /><path d="M21 21l8 8M1 15l5-4 5 3 11-7M7 16v6M11 17v7M15 16v8M20 13v8" /></svg></button>
        </div>
        <div class="wells">
          <section v-for="w in wells" :key="w.t">
            <h3>{{ w.t }}</h3>
            <div class="well" :class="{ empty: !w.chips.length, tall: w.chips.length > 1 }">
              <div v-for="c in w.chips" :key="c" class="chip">
                {{ c }}
                <button aria-label="菜单"><svg width="18" height="10"><path d="M1 1l8 8 8-8" /></svg></button>
                <button class="remove" aria-label="删除"><svg width="18" height="18"><path d="M1 1l16 16M17 1L1 17" /></svg></button>
              </div>
              <p v-if="!w.chips.length">在此处添加数据字段</p>
              <i v-if="w.chips.length" class="mark"></i>
            </div>
          </section>
          <i class="thumb"></i>
        </div>
        <i class="mark vmark"></i>
      </aside>

      <aside class="fields">
        <header><h2>字段</h2><svg width="18" height="18"><path d="M1 1l8 8-8 8M9 1l8 8-8 8" /></svg></header>
        <label class="search"><svg width="22" height="22"><circle cx="14" cy="8" r="7" /><path d="M9 13l-8 8" /></svg><input placeholder="搜索" aria-label="搜索"></label>
        <div class="list">
          <div v-for="(t, i) in tables" :key="t" class="trow">
            <svg class="chev" width="18" height="18"><path :d="i === 5 ? 'M1 5l8 8 8-8' : 'M5 1l8 8-8 8'" /></svg>
            <svg class="tbl" width="20" height="19"><path d="M1 1h18v17H1zM1 5h18M1 9h18M1 14h18M7 5v13M13 5v13" /></svg>
            <span>{{ t }}</span>
            <template v-if="i === 2">
              <svg class="badge" width="18" height="18"><circle cx="9" cy="9" r="9" fill="#f2c811" /><path d="M5 9l3 3 5-5" fill="none" stroke="#252423" stroke-width="2" /></svg>
              <i class="mark"></i>
            </template>
          </div>
          <label v-for="(f, i) in fields" :key="i" class="frow">
            <input type="checkbox">
            <svg width="17" height="24"><path d="M1 1h15v22H1zM4 4h9v4H4z" /><path d="M4 12h9M4 16h9M4 20h9" stroke-dasharray="2 2" /></svg>
            <span>{{ f }}</span>
          </label>
          <i class="bar"></i>
        </div>
      </aside>
    </main>

    <footer class="status"><span>第 2 页(共 6 页)</span><span>存储模式: 混合</span><span class="wm">CSDN @仲月紫火</span></footer>

    <svg class="arrows" width="100%" height="560">
      <path d="M1572 319L1262 363" stroke="#ed1c24" stroke-width="7" stroke-linecap="round" />
      <path d="M1242 368l25-16-4 11 7 13z" fill="#ed1c24" />
      <path d="M0 196l28-7-3 7 4 17-12-9-17-1z" fill="#ed1c24" />
    </svg>
  </div>
</template>

<style>
body { margin: 0; }
</style>

<style scoped>
* { box-sizing: border-box; }
h2, h3, p, ul { margin: 0; padding: 0; font-weight: inherit; }
ul { list-style: none; }
button { font: inherit; color: inherit; background: none; border: 0; padding: 0; }
svg { display: block; flex: none; }
.app { position: relative; display: flex; flex-direction: column; height: 100vh; overflow: hidden; background: #f3f2f1; color: #323130; font: 300 18px/24px "Open Sans", "Noto Sans CJK SC", sans-serif; }
.mark { position: absolute; border: 3px solid #ed1c24; pointer-events: none; z-index: 3; }

.menu { display: flex; height: 47px; padding-left: 11px; font-size: 21px; line-height: 48px; flex: none; }
.menu button { position: relative; width: 87px; }
.menu button:first-child { margin-right: 10px; }
.menu .on { font-weight: 700; color: #252423; }
.menu .on span { display: inline-block; height: 47px; border-bottom: 5px solid #f2c811; }
.menu .ctx { background: #fff; color: #7a6400; font-weight: 700; }
.menu .wide { width: 138px; margin-left: 6px; }

.ribbon { position: relative; display: flex; height: 142px; flex: none; padding-top: 7px; box-shadow: 0 2px 6px rgba(0, 0, 0, .2); z-index: 1; background: #f3f2f1; }
.group { display: flex; flex-direction: column; height: 132px; padding: 3px 12px 0; border-right: 1px solid #c8c6c4; }
.tools { display: flex; height: 113px; }
.tool { display: flex; flex-direction: column; align-items: center; min-width: 61px; padding: 0 3px; white-space: nowrap; }
.tool > svg:first-child { margin-bottom: 3px; overflow: visible; }
.tool .latin { padding: 0 1px; font-size: 16px; font-weight: 400; }
.off { color: #a19f9d; }
.caret path { fill: none; stroke: currentColor; stroke-width: 2; }
.group h2 { font-size: 18px; line-height: 20px; text-align: center; white-space: nowrap; }
.minis { display: flex; flex-direction: column; gap: 12px; padding: 3px 3px 0 5px; }
.mini { display: flex; gap: 6px; align-items: center; height: 24px; }
.collapse { margin: auto 8px 8px auto; }
.collapse path { fill: none; stroke: #252423; stroke-width: 2; }

.work { display: flex; flex: 1; min-height: 0; border-bottom: 1px solid #d8d6d4; }
.left { display: flex; flex-direction: column; flex: 1; min-width: 0; }
.stage { display: flex; flex: 1; min-height: 0; }
.rail { position: relative; width: 62px; flex: none; border-right: 1px solid #dddbd9; }
.rail button { display: flex; align-items: center; justify-content: center; width: 100%; height: 59px; border: 4px solid transparent; border-width: 0 4px; }
.rail .active { border-left-color: #f2c811; }
.rail path { fill: none; stroke: #605e5c; stroke-width: 2; }
.rail .active path { stroke: #252423; }
.rail .mark { left: 8px; top: 4px; width: 53px; height: 53px; }
.canvas { flex: 1; min-width: 0; padding: 15px 8px 0 15px; background: #363636; overflow: hidden; }
.page { display: flex; height: 100%; background: #333; box-shadow: 0 0 14px 1px #888; }
.side { display: flex; flex-direction: column; width: 95px; flex: none; padding-top: 57px; background: #454545; border-right: 1px solid #3c3c3c; }
.side a { height: 44px; margin-top: 39px; line-height: 42px; text-align: center; color: #fff; text-decoration: none; font-weight: 400; }
.side a:first-child { margin-top: 0; }
.side a:nth-child(2) { margin-top: 28px; }
.side a:nth-child(n + 5) { margin-top: 36px; }
.side .on { background: #388eff; line-height: 44px; }
.sheet { flex: 1; min-width: 0; color: #fff; font-weight: 400; font-size: 13px; line-height: 16px; }
.filters { display: flex; align-items: center; height: 41px; padding: 4px 0 0 243px; background: #454545; }
.dropdown { position: relative; width: 132px; margin-left: 10px; }
.dropdown select { width: 100%; height: 26px; padding: 0 4px; appearance: none; background: none; color: #fff; border: 2px solid #8a8886; font: 400 12px "Open Sans", sans-serif; }
.dropdown svg { position: absolute; right: 5px; top: 8px; }
.dropdown path { fill: none; stroke: #fff; }
.period { margin: 0 15px 0 75px; }
.date { width: 72px; height: 26px; margin-right: 6px; padding: 0; text-align: center; background: none; color: #fff; border: 2px solid #8a8886; font: 400 12px "Open Sans", sans-serif; }
.scope { margin-left: 64px; }
.radio { display: flex; align-items: center; gap: 5px; width: 176px; height: 28px; padding: 0 5px 0 9px; background: #3a3a3a; font-size: 12px; }
.radio input { appearance: none; width: 12px; height: 12px; margin: 0 3px 0 0; border-radius: 6px; background: #222; border: 2px solid #333; }
.radio span { flex: 1; background: #404040; }

.body { padding: 14px 15px 0 10px; }
.row { display: flex; gap: 10px; }
.top { height: 232px; margin-bottom: 7px; }
.card { position: relative; background: #454545; }
.card h3 { padding-left: 5px; font-size: 15px; line-height: 18px; white-space: nowrap; }
.kpis { display: flex; flex-direction: column; gap: 6px; width: 319px; flex: none; }
.kpi { flex: 1; display: flex; flex-direction: column; margin-left: 2px; }
.kpi h3 { padding: 5px 3px 0 0; text-align: center; line-height: 22px; }
.kpi + .kpi h3 { padding-top: 2px; }
.kpi strong { color: #388eff; font-weight: 400; font-size: 36px; line-height: 54px; text-align: center; }
.kpi + .kpi strong { line-height: 52px; }
.kpi p { display: flex; align-items: center; padding: 9px 0 0 29px; }
.kpi b { width: 64px; font-weight: 400; text-align: right; margin-right: 6px; }
.kpi .second { margin-left: 54px; }
.kpi .second + b { width: 54px; }
.kpi + .kpi .second { margin-left: 46px; }
.kpi + .kpi .second + b { width: 63px; }
.up, .down { fill: none; stroke: #55b04c; stroke-width: 3; }
.down { stroke: #f05c37; }
.combo { flex: 1; }
.combo h3 { padding-left: 6px; line-height: 22px; }
.combo .legend { margin-top: 10px; }
.combo .mark { inset: -8px -6px -8px -7px; }
.handles { position: absolute; inset: 0; width: 100%; }
.actions { position: absolute; right: 1px; top: -36px; display: flex; gap: 6px; }
.actions button { display: flex; align-items: center; justify-content: center; width: 36px; height: 36px; background: #3c3c3c; }
.actions path { fill: none; stroke: #c8c6c4; stroke-width: 2; }
.actions g { fill: #c8c6c4; }
.legend { display: flex; gap: 4px; margin: 12px 0 0 6px; font-size: 12px; line-height: 16px; white-space: nowrap; }
.tight { gap: 3px; }
.legend li { display: flex; align-items: center; gap: 2px; }
.legend i { width: 10px; height: 10px; border-radius: 5px; }
.c1 { background: #388eff; } .c2 { background: #5cb60f; } .c3 { background: #fff; } .c4 { background: #1b3fae; }
.c5 { background: #5dabf5; } .c6 { background: #b8dcfa; } .c7 { background: #1f4f8c; } .c8 { background: #c9d2d6; }
.chart { width: 100%; }
.chart text { font-size: 11px; fill: #fff; }
.chart line { stroke: #6a6a6a; stroke-dasharray: 1 5; }
.chart polyline { fill: none; stroke-width: 3; }
.colA { display: flex; flex-direction: column; gap: 8px; width: 563px; flex: none; }
.share { height: 231px; }
.share table { width: 503px; margin: 19px 0 0 21px; border-collapse: collapse; table-layout: fixed; border: 1px solid #ddd; }
.share th { position: relative; height: 36px; padding: 4px 0 0; vertical-align: top; background: #388eff; font-weight: 400; border: 1px solid #d0e4fa; }
.share th i { position: absolute; left: 6px; bottom: 6px; border: 6px solid transparent; border-top-color: #fff; border-bottom: 0; }
.w1 { width: 100px; } .w2 { width: 142px; } .w3 { width: 157px; }
.share td { height: 24px; padding: 0 5px; border: 1px solid #ddd; border-top-color: #555; border-bottom-color: #555; }
.share tr:nth-child(even) td { height: 23px; }
.share tbody tr:last-child td { border-bottom-color: #ddd; }
.share .num { text-align: right; }
.barcell div { height: 17px; background: #5dabf5; }
.chg span { float: left; }
.chg svg { float: right; }
.off-amt { display: flex; gap: 31px; padding: 33px 0 0 33px; }
.burst { height: 264px; overflow: hidden; }
.burst h3 { line-height: 20px; }
.burst .chart { margin-top: 0; }
.colB { display: flex; flex-direction: column; flex: 1; gap: 9px; }
.pair { display: flex; gap: 14px; height: 359px; }
.c { width: 258px; overflow: hidden; }
.d { flex: 1; overflow: hidden; padding-top: 2px; }
.next { position: absolute; right: 14px; top: 31px; }
.next path { fill: none; stroke: #fff; stroke-width: 2; }
.e { flex: 1; }
.e h3 { line-height: 20px; }
.scroll { width: 13px; background: #3a3a3a; border-right: 1px solid #8a8886; }
.scroll i { display: block; height: 556px; background: #c8c6c4; }
.filterpane { display: flex; flex-direction: column; align-items: center; width: 48px; padding-top: 23px; background: #3a3a3a; color: #fff; }
.filterpane path { fill: none; stroke: #fff; stroke-width: 2; }
.horn { margin: 51px 0 16px; }
.filterpane h2 { writing-mode: vertical-rl; text-orientation: sideways; font-size: 24px; font-weight: 700; }

.sheets { display: flex; height: 52px; flex: none; }
.pager { width: 122px; padding: 20px 0 0 70px; border-right: 1px solid #c8c6c4; }
.sheets button { display: flex; align-items: center; justify-content: center; gap: 5px; width: 97px; border-right: 1px solid #c8c6c4; color: #252423; }
.sheets button svg { margin-top: 6px; }
.sheets .on { background: #fff; border-bottom: 6px solid #f2c811; padding-top: 6px; width: 99px; }
.sheets button path { fill: none; stroke: #605e5c; stroke-width: 1; }
.sheets .add { width: 58px; margin: 2px 0; background: #f2c811; border: 0; }
.sheets .add svg { margin: 0; }
.sheets .add path { stroke: #767472; stroke-width: 5; }

.viz { position: relative; width: 273px; flex: none; border-left: 1px solid #dddbd9; border-right: 1px solid #dddbd9; display: flex; flex-direction: column; }
.viz header { display: flex; align-items: center; justify-content: space-between; height: 76px; padding: 0 18px 0 18px; }
.viz header h2, .fields h2 { font-size: 24px; font-weight: 700; color: #3b3a39; }
.viz header svg { margin-bottom: 10px; }
.viz header path, .vtabs svg, .chip path, .chev path, .tbl path, .frow path, .search svg { fill: none; stroke: #323130; stroke-width: 1; }
.fields header path { fill: none; stroke: #323130; stroke-width: 2; }
.vgrid { display: grid; grid-template-columns: repeat(6, 24px); gap: 12px 18px; padding: 2px 0 0 9px; }
.vgrid button { height: 24px; }
.vgrid svg { overflow: visible; }
.vgrid .picked { background: #d2d0ce; outline: 4px solid #d2d0ce; box-shadow: 0 0 0 5px #767472; }
.custom { display: flex; align-items: center; gap: 14px; height: 39px; margin-top: 22px; padding: 0 5px 8px 9px; border-bottom: 1px solid #dddbd9; flex: none; }
.custom span { margin: 0 0 6px auto; color: #ed1c24; font-size: 23px; white-space: nowrap; }
.vtabs { display: flex; padding: 13px 0 0 19px; }
.vtabs button { display: flex; flex-direction: column; align-items: center; width: 60px; height: 42px; }
.vtabs svg { stroke-width: 2; }
.vtabs .on { position: relative; }
.vtabs .on::after { content: ""; width: 60px; height: 6px; margin-top: 6px; border-radius: 3px; background: #f2c811; }
.wells { position: relative; flex: 1; min-height: 0; overflow: hidden; padding: 7px 8px 0 2px; }
.wells section { padding-left: 5px; }
.wells h3 { padding-left: 12px; margin-bottom: 8px; }
.well { position: relative; width: 256px; min-height: 42px; margin-bottom: 16px; padding: 5px 4px 15px; background: #fff; border: 1px dashed #c8c6c4; border-radius: 3px; }
.empty { padding: 8px 15px; }
.tall { min-height: 100px; }
.chip { display: flex; align-items: center; height: 34px; padding: 0 4px 0 6px; gap: 6px; background: #edebe9; border: 1px solid #c8c6c4; border-radius: 3px; }
.chip + .chip { margin-top: 3px; }
.chip button:first-of-type { margin-left: auto; }
.chip .remove path { stroke-width: 2; }
.well .mark { inset: -2px -3px 6px 1px; }
.wells section:nth-child(3) .mark { left: -6px; right: -2px; }
.wells .tall .mark { inset: 3px -5px 15px -3px; }
.thumb { position: absolute; right: 0; top: -2px; width: 9px; height: 203px; border-radius: 4px; background: #d2d0ce; }
.vmark { inset: -2px 0 auto -2px; height: 339px; }

.fields { display: flex; flex-direction: column; width: 270px; flex: none; padding: 0 6px; }
.fields header { display: flex; align-items: center; justify-content: space-between; height: 58px; padding: 0 6px; }
.fields h2 { color: #252423; }
.search { display: flex; align-items: center; gap: 10px; height: 40px; margin-top: 10px; padding-left: 11px; background: #fff; border: 1px solid #767472; border-radius: 3px; flex: none; }
.search input { min-width: 0; border: 0; outline: 0; padding: 0; background: none; font: 300 21px "Noto Sans CJK SC", sans-serif; }
.search input::placeholder { color: #484644; }
.list { position: relative; flex: 1; min-height: 0; margin: 13px 0 12px; overflow: hidden; }
.trow { position: relative; display: flex; align-items: center; height: 36px; padding-left: 4px; }
.trow span { margin-left: 8px; }
.tbl { margin-left: 5px; }
.tbl path, .frow path { stroke-width: 2; }
.badge { position: absolute; left: 38px; top: 19px; }
.trow .mark { left: 0; top: 2px; width: 201px; height: 38px; }
.frow { display: flex; align-items: center; height: 36px; padding-left: 51px; white-space: nowrap; }
.frow input { appearance: none; width: 18px; height: 18px; margin: 0 12px 0 0; border: 1px solid #767472; border-radius: 3px; flex: none; }
.frow span { margin-left: 10px; }
.bar { position: absolute; right: 0; top: 0; width: 12px; height: 337px; background: #c8c8c8; }

.status { position: relative; display: flex; align-items: center; justify-content: space-between; height: 36px; padding: 0 8px; flex: none; }
.wm { position: absolute; right: 20px; top: 5px; color: rgba(110, 110, 110, .75); font-size: 19px; }
.arrows { position: absolute; left: 0; top: 0; z-index: 5; pointer-events: none; }
</style>
